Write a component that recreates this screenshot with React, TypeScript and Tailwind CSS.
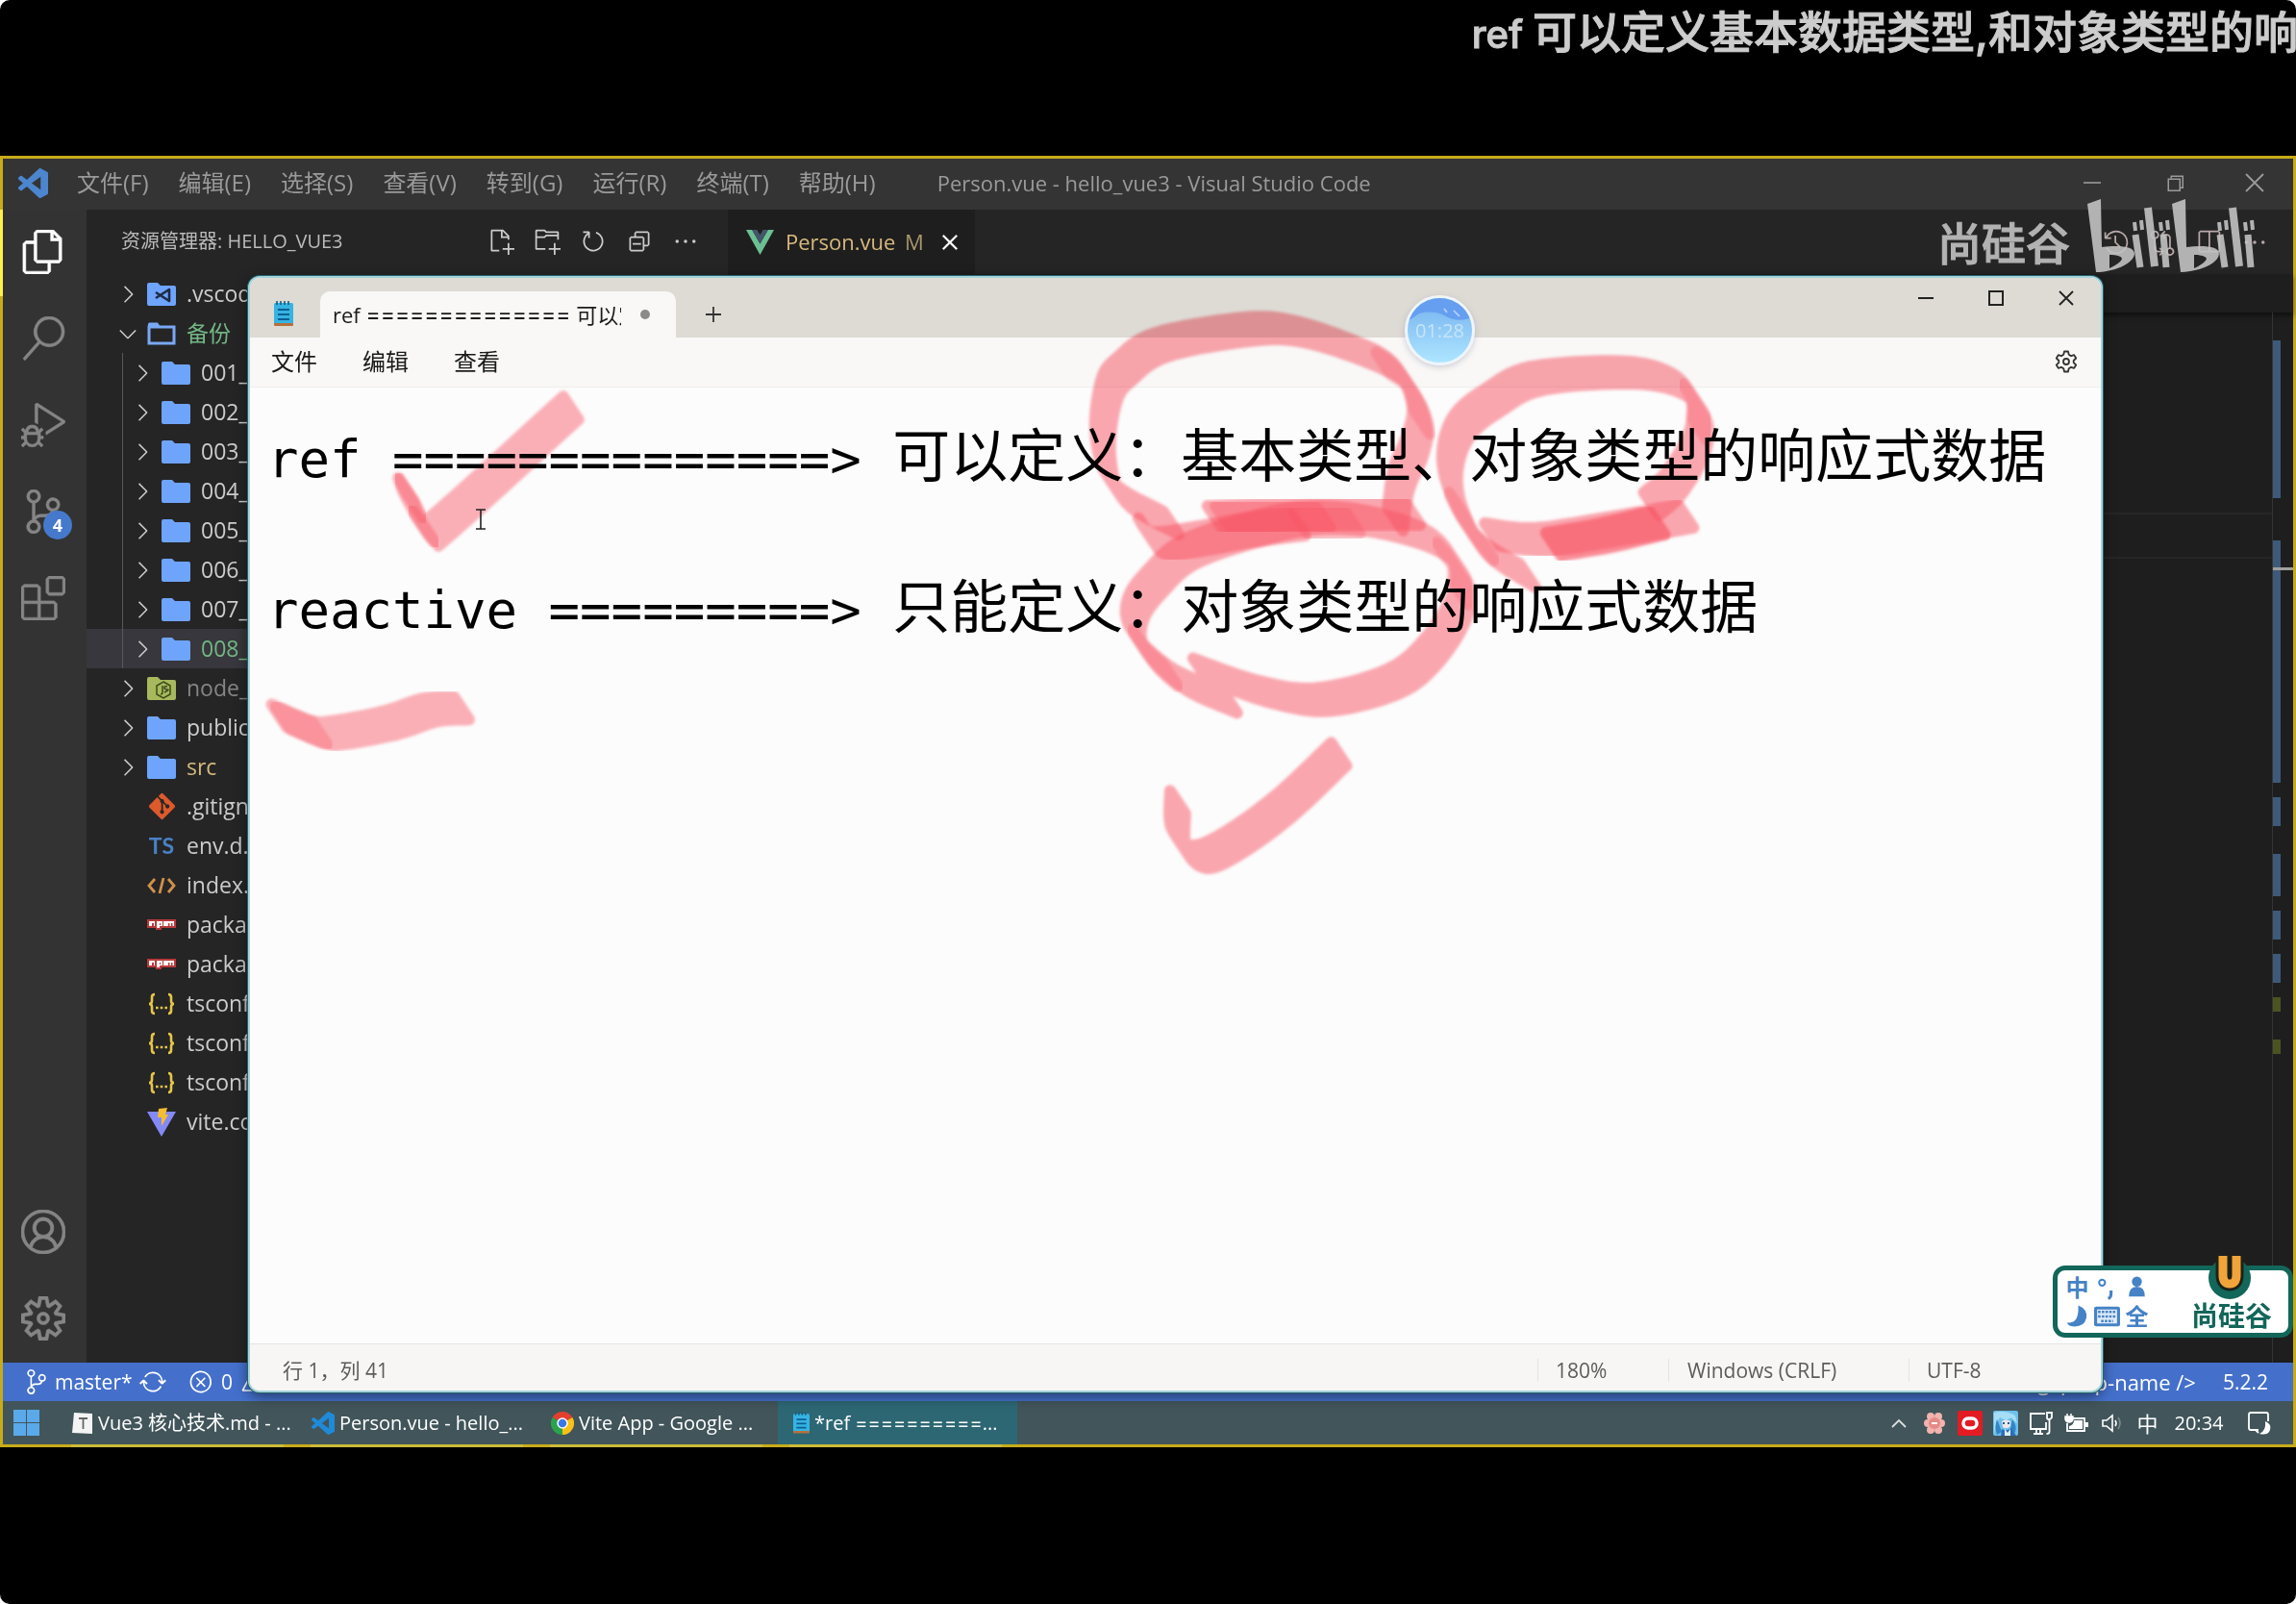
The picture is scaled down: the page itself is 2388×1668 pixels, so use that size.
import React from "react";
import {
  VscAccount,
  VscChevronDown,
  VscChevronRight,
  VscChromeRestore,
  VscClose,
  VscCollapseAll,
  VscDebugAlt,
  VscEllipsis,
  VscError,
  VscExtensions,
  VscFiles,
  VscGitCompare,
  VscHistory,
  VscNewFile,
  VscNewFolder,
  VscRefresh,
  VscSearch,
  VscSettingsGear,
  VscSourceControl,
  VscSplitHorizontal,
  VscSync,
  VscWarning,
} from "react-icons/vsc";
import { FaGitAlt } from "react-icons/fa";

/* ---------- logos and small drawings ---------- */

function CodeLogo({ className, color }: { className: string; color: string }) {
  return (
    <svg viewBox="0 0 100 100" className={className} aria-hidden="true">
      <path
        d="M96 11 76 1c-2-1-5-1-7 1L29 39 12 26c-2-1-4-1-5 0l-6 5c-2 2-2 4 0 6l15 13L1 63c-2 2-2 4 0 6l6 5c1 1 3 1 5 0l17-13 40 37c2 2 5 2 7 1l20-10c2-1 4-3 4-5V16c0-2-2-4-4-5ZM75 72 45 50l30-22v44Z"
        fill={color}
        fillRule="evenodd"
      />
    </svg>
  );
}

function VueLogo() {
  return (
    <svg viewBox="0 0 28 25" className="h-[26px] w-[29px]" aria-hidden="true">
      <path d="M0 0h6l8 14L22 0h6L14 25Z" fill="#6cc092" />
      <path d="M6 0h5l3 5 3-5h5l-8 14Z" fill="#43566b" />
    </svg>
  );
}

function NotepadIcon({ className }: { className: string }) {
  return (
    <svg viewBox="0 0 20 26" className={className} aria-hidden="true">
      <rect x="0" y="2" width="20" height="23" rx="1.5" fill="#35b4e3" />
      <rect x="0" y="23" width="20" height="3" rx="1" fill="#b5713c" />
      <path d="M3 0v4M7 0v4M11 0v4M15 0v4" stroke="#17597d" strokeWidth="1.6" />
      <path d="M4 9h12M4 14h12M4 19h12" stroke="#0d5f92" strokeWidth="2" />
    </svg>
  );
}

function ChromeIcon() {
  return (
    <svg viewBox="0 0 48 48" className="size-6 shrink-0" aria-hidden="true">
      <path d="M24 24 3.200 12A24 24 0 0 1 44.800 12Z" fill="#e2402f" />
      <path d="M24 24V48A24 24 0 0 1 3.200 12Z" fill="#2ba24c" />
      <path d="M24 24 44.800 12A24 24 0 0 1 24 48Z" fill="#fbc116" />
      <circle cx="24" cy="24" r="11.500" fill="#fff" />
      <circle cx="24" cy="24" r="8.500" fill="#3b78e7" />
    </svg>
  );
}

function FolderIcon({ kind }: { kind: string }) {
  const fill = kind === "node" ? "#a7b95c" : "#6ea4fb";
  if (kind === "open") {
    return (
      <svg viewBox="0 0 30 24" className="h-6 w-[30px]" aria-hidden="true">
        <path d="M2 5h26v17H2Z" fill="none" stroke="#79a9f5" strokeWidth="3" />
        <path d="M1 2q0-1.500 1.500-1.500H11l3 4.500H1Z" fill="#79a9f5" />
      </svg>
    );
  }
  return (
    <svg viewBox="0 0 30 24" className="h-6 w-[30px]" aria-hidden="true">
      <path d="M0 2Q0 0 2 0h9l3 3h14q2 0 2 2v17q0 2-2 2H2q-2 0-2-2Z" fill={fill} />
      {kind === "vscode" && (
        <path d="M9 10l14 9V7L9 16" fill="none" stroke="#1e2b45" strokeWidth="2.600" strokeLinejoin="round" />
      )}
      {kind === "node" && (
        <g fill="none" stroke="#3c4a1c" strokeWidth="1.500">
          <path d="m17 5 7 4v9l-7 4-7-4V9Z" />
          <path d="M16 9v7q0 2-2 2M21 10q-3-1-3 1t3 2-3 3" />
        </g>
      )}
    </svg>
  );
}

function FileGlyph({ kind }: { kind: string }) {
  switch (kind) {
    case "git":
      return <FaGitAlt className="size-[31px] text-[#dd5a2b]" />;
    case "ts":
      return <span className="font-['Lato'] text-[23px] font-bold leading-none text-[#4a80c4]">TS</span>;
    case "html":
      return (
        <svg viewBox="0 0 30 18" className="h-[18px] w-[30px]" fill="none" stroke="#d0924a" strokeWidth="2.800" aria-hidden="true">
          <path d="M8 2 2 9l6 7M22 2l6 7-6 7M17 1l-4 16" />
        </svg>
      );
    case "npm":
      return (
        <svg viewBox="0 0 30 11" className="h-[11px] w-[30px]" aria-hidden="true">
          <path d="M0 0h30v9H15v2H9V9H0Z" fill="#b9393b" />
          <path d="M2 2h6v5H7V4H5v3H2ZM10 2h6v5h-3v2h-3ZM13 4v2h1V4ZM17 2h11v5h-1.500V4H25v3h-1.500V4H22v3h-5Z" fill="#fff" fillRule="evenodd" />
        </svg>
      );
    case "json":
      return (
        <svg viewBox="0 0 30 24" className="h-6 w-[30px]" fill="none" stroke="#e6c54a" strokeWidth="2.600" aria-hidden="true">
          <path d="M8 2Q5 2 5 5v4q0 3-3 3 3 0 3 3v4q0 3 3 3M22 2q3 0 3 3v4q0 3 3 3-3 0-3 3v4q0 3-3 3" />
          <path d="M9 16h2.600M13.700 16h2.600M18.400 16H21" />
        </svg>
      );
    default:
      return (
        <svg viewBox="0 0 30 30" className="size-[30px]" aria-hidden="true">
          <path d="M0 4h30L15 30Z" fill="#8489f5" />
          <path d="M12 1 21 0l-2 7h3l-7 12v-9h-4Z" fill="#f5be2f" />
        </svg>
      );
  }
}

function BilibiliLogo() {
  const half = (
    <g>
      <path
        d="M0 5 14 0l1 50c18-2 34-1 34 7C48 68 26 76 9 76ZM23 58v14c7-3 12-7 13-10-1-3-6-4-13-4Z"
        fill="currentColor"
        fillRule="evenodd"
      />
      <g stroke="currentColor" fill="none">
        <path d="m50 37 5 34M79 37l3 34" strokeWidth="7" />
        <path d="m63 9 7 61" strokeWidth="8" />
        <path d="m49 24 1 9M56 22l1 10M76 24l1 9M83 22l1 10" strokeWidth="4" />
      </g>
    </g>
  );
  return (
    <svg viewBox="0 0 176 77" className="h-[77px] w-44" role="img" aria-label="bilibili">
      {half}
      <g transform="translate(88 0)">{half}</g>
    </svg>
  );
}

/* ---------- marker strokes ---------- */

type Pt = [number, number];

const NIB: Pt = [8, 12];

function smooth(points: Pt[]): Pt[] {
  const out: Pt[] = [];
  for (let i = 0; i < points.length - 1; i++) {
    const p0 = points[Math.max(0, i - 1)];
    const p1 = points[i];
    const p2 = points[i + 1];
    const p3 = points[Math.min(points.length - 1, i + 2)];
    for (let s = 0; s < 8; s++) {
      const t = s / 8;
      const f = (k: 0 | 1) =>
        0.5 *
        (2 * p1[k] +
          (p2[k] - p0[k]) * t +
          (2 * p0[k] - 5 * p1[k] + 4 * p2[k] - p3[k]) * t * t +
          (3 * p1[k] - p0[k] - 3 * p2[k] + p3[k]) * t * t * t);
      out.push([f(0), f(1)]);
    }
  }
  out.push(points[points.length - 1]);
  return out;
}

/** Area swept by a slanted chisel nib moved along the points. */
function sweep(points: Pt[]): string {
  const line = smooth(points);
  const [nx, ny] = NIB;
  let d = "";
  for (let i = 0; i < line.length - 1; i++) {
    const [ax, ay] = line[i];
    const [bx, by] = line[i + 1];
    const quad: Pt[] = [
      [ax - nx, ay - ny],
      [ax + nx, ay + ny],
      [bx + nx, by + ny],
      [bx - nx, by - ny],
    ];
    if (nx * (by - ay) - ny * (bx - ax) < 0) quad.reverse();
    d += "M" + quad.map((p) => p.map((v) => v.toFixed(1)).join(" ")).join("L") + "Z";
  }
  return d;
}

const STROKES: { o: number; pts: Pt[] }[] = [
  { o: 0.5, pts: [[1218, 545], [1163, 512], [1147, 463], [1153, 408], [1170, 384], [1208, 359], [1296, 343], [1350, 345], [1418, 367], [1458, 390], [1477, 431], [1473, 463], [1458, 500], [1452, 541]] },
  { o: 0.3, pts: [[1440, 379], [1458, 392], [1474, 416], [1480, 440]] },
  { o: 0.5, pts: [[1590, 600], [1541, 567], [1515, 520], [1509, 480], [1522, 443], [1555, 416], [1600, 394], [1695, 388], [1747, 400], [1769, 427], [1766, 463], [1742, 504], [1719, 525]] },
  { o: 0.3, pts: [[1760, 412], [1769, 429], [1769, 447]] },
  { o: 0.3, pts: [[1547, 572], [1530, 551], [1516, 525]] },
  { o: 0.5, pts: [[1279, 731], [1224, 706], [1184, 667], [1181, 635], [1203, 604], [1237, 575], [1303, 552], [1360, 540], [1424, 543], [1490, 563], [1519, 594], [1519, 631], [1490, 678], [1450, 710], [1377, 729], [1316, 721], [1249, 698]] },
  { o: 0.3, pts: [[1503, 577], [1518, 596], [1520, 618]] },
  { o: 0.3, pts: [[1217, 703], [1198, 686], [1186, 668]] },
  { o: 0.5, pts: [[1192, 552], [1206, 566], [1250, 561], [1300, 552], [1350, 546]] },
  { o: 0.5, pts: [[1264, 539], [1350, 536], [1470, 535]] },
  { o: 0.4, pts: [[1272, 539], [1376, 538]] },
  { o: 0.35, pts: [[1354, 546], [1407, 544]] },
  { o: 0.5, pts: [[1553, 557], [1605, 562], [1680, 551], [1755, 538]] },
  { o: 0.65, pts: [[1617, 567], [1670, 558], [1725, 545]] },
  { o: 0.5, pts: [[1225, 836], [1226, 874], [1247, 893], [1282, 879], [1337, 839], [1393, 786]] },
  { o: 0.45, pts: [[420, 510], [428, 530], [444, 553], [462, 543], [592, 425]] },
  { o: 0.4, pts: [[420, 510], [430, 528]] },
  { o: 0.4, pts: [[434, 543], [443, 554]] },
  { o: 0.45, pts: [[288, 746], [328, 763], [353, 763], [405, 753], [445, 740], [478, 738]] },
  { o: 0.3, pts: [[292, 748], [330, 764]] },
];

function MarkerLayer() {
  return (
    <svg
      viewBox="3 165 2382 1341"
      className="pointer-events-none absolute inset-0 size-full mix-blend-multiply"
      aria-hidden="true"
    >
      <filter id="marker-edge">
        <feGaussianBlur stdDeviation="1.5" />
      </filter>
      {STROKES.map((s, i) => (
        <g key={i} opacity={s.o} filter="url(#marker-edge)">
          <path d={sweep(s.pts)} fill="#fb5364" stroke="#fb5364" strokeWidth="12" strokeLinejoin="round" />
        </g>
      ))}
    </svg>
  );
}

/* ---------- editor ---------- */

const MENUS = ["文件(F)", "编辑(E)", "选择(S)", "查看(V)", "转到(G)", "运行(R)", "终端(T)", "帮助(H)"];

type Row = { name: string; icon: string; level?: number; fold?: "open" | "closed"; tone?: string; selected?: boolean };

const ROWS: Row[] = [
  { name: ".vscode", icon: "vscode", fold: "closed" },
  { name: "备份", icon: "open", fold: "open", tone: "text-[#73b683]" },
  { name: "001_Vue3", icon: "folder", fold: "closed", level: 1 },
  { name: "002_Vue3", icon: "folder", fold: "closed", level: 1 },
  { name: "003_Vue3", icon: "folder", fold: "closed", level: 1 },
  { name: "004_Vue3", icon: "folder", fold: "closed", level: 1 },
  { name: "005_Vue3", icon: "folder", fold: "closed", level: 1 },
  { name: "006_Vue3", icon: "folder", fold: "closed", level: 1 },
  { name: "007_Vue3", icon: "folder", fold: "closed", level: 1 },
  { name: "008_Vue3", icon: "folder", fold: "closed", level: 1, tone: "text-[#73b683]", selected: true },
  { name: "node_modules", icon: "node", fold: "closed", tone: "text-[#858585]" },
  { name: "public", icon: "folder", fold: "closed" },
  { name: "src", icon: "folder", fold: "closed", tone: "text-[#d6b97d]" },
  { name: ".gitignore", icon: "git" },
  { name: "env.d.ts", icon: "ts" },
  { name: "index.html", icon: "html" },
  { name: "package-lock.json", icon: "npm" },
  { name: "package.json", icon: "npm" },
  { name: "tsconfig.app.json", icon: "json" },
  { name: "tsconfig.json", icon: "json" },
  { name: "tsconfig.node.json", icon: "json" },
  { name: "vite.config.ts", icon: "vite" },
];

function TitleBar() {
  return (
    <header className="flex h-[53px] shrink-0 items-center bg-[#343435] pb-[3px] pl-4 text-[#9a9a9a]">
      <CodeLogo className="size-[31px]" color="#4b86cf" />
      <nav className="ml-[30px] flex gap-[31px] text-[24px]">
        {MENUS.map((m) => (
          <button key={m} type="button" className="whitespace-nowrap">
            {m}
          </button>
        ))}
      </nav>
      <p className="ml-16 flex-1 whitespace-nowrap text-[22px]">Person.vue - hello_vue3 - Visual Studio Code</p>
      <div className="flex items-center">
        <button type="button" aria-label="最小化" className="grid w-[86px] place-items-center">
          <span className="h-[2px] w-[18px] bg-[#858585]" />
        </button>
        <button type="button" aria-label="还原" className="grid w-[86px] place-items-center">
          <VscChromeRestore className="size-6" />
        </button>
        <button type="button" aria-label="关闭" className="grid w-20 place-items-center">
          <svg viewBox="0 0 20 20" className="size-5" stroke="#9a9a9a" strokeWidth="1.800" aria-hidden="true">
            <path d="m1 1 18 18M19 1 1 19" />
          </svg>
        </button>
      </div>
    </header>
  );
}

function ActivityBar() {
  const item = "relative grid h-[90px] w-full place-items-center pr-[4px] pb-[2px] [&_svg]:stroke-[0.3px]";
  return (
    <nav aria-label="活动栏" className="flex w-[87px] shrink-0 flex-col bg-[#333333] text-[#858585]">
      <button type="button" aria-label="资源管理器" className={item + " text-white"}>
        <VscFiles className="size-[46px]" />
        <span className="absolute -left-[3px] top-0 h-full w-[3px] bg-[#fff04a]" />
      </button>
      <button type="button" aria-label="搜索" className={item}>
        <VscSearch className="size-[46px]" />
      </button>
      <button type="button" aria-label="运行和调试" className={item}>
        <VscDebugAlt className="size-[46px]" />
      </button>
      <button type="button" aria-label="源代码管理" className={item}>
        <VscSourceControl className="size-[46px]" />
        <span className="absolute bottom-[17px] right-[15px] grid size-[30px] place-items-center rounded-full bg-[#4579cc] text-[18px] font-bold leading-none text-white">
          4
        </span>
      </button>
      <button type="button" aria-label="扩展" className={item}>
        <VscExtensions className="size-[46px]" />
      </button>
      <button type="button" aria-label="账户" className={item + " mt-auto"}>
        <VscAccount className="size-[46px]" />
      </button>
      <button type="button" aria-label="管理" className={item}>
        <VscSettingsGear className="size-[46px]" />
      </button>
    </nav>
  );
}

function Explorer() {
  return (
    <aside className="flex w-[667px] shrink-0 flex-col bg-[#252526] text-[#cccccc]">
      <div className="flex h-[67px] items-center pb-px pl-9 pr-[30px]">
        <h2 className="flex-1 whitespace-nowrap text-[20px] text-[#bbbbbb]">资源管理器: HELLO_VUE3</h2>
        <div className="flex gap-5">
          <button type="button" aria-label="新建文件"><VscNewFile className="size-7" /></button>
          <button type="button" aria-label="新建文件夹"><VscNewFolder className="size-7" /></button>
          <button type="button" aria-label="刷新"><VscRefresh className="size-7" /></button>
          <button type="button" aria-label="全部折叠"><VscCollapseAll className="size-7" /></button>
          <button type="button" aria-label="更多"><VscEllipsis className="size-7" /></button>
        </div>
      </div>
      <ul className="text-[23px]">
        {ROWS.map((r, i) => (
          <li key={i} className={r.selected ? "flex h-[41px] bg-[#37373d]" : "flex h-[41px]"}>
            {r.level ? <span className="ml-[37px] w-[7px] border-l border-[#585858]" /> : <span className="w-[29px]" />}
            <button type="button" className="flex items-center whitespace-nowrap">
              <span className="grid w-[24px] place-items-center">
                {r.fold === "closed" && <VscChevronRight className="size-7 shrink-0" />}
                {r.fold === "open" && <VscChevronDown className="size-7 shrink-0" />}
              </span>
              <span className="ml-[10px] grid w-[30px] place-items-center">
                {r.fold ? <FolderIcon kind={r.icon} /> : <FileGlyph kind={r.icon} />}
              </span>
              <span className={"ml-[11px] " + (r.tone ?? "")}>{r.name}</span>
            </button>
          </li>
        ))}
      </ul>
    </aside>
  );
}

const RULER = [
  { gap: 29, size: 164, tone: "bg-[#3d5a7a]" },
  { gap: 44, size: 252, tone: "bg-[#3d5a7a]" },
  { gap: 15, size: 30, tone: "bg-[#3d5a7a]" },
  { gap: 29, size: 44, tone: "bg-[#3d5a7a]" },
  { gap: 15, size: 30, tone: "bg-[#3d5a7a]" },
  { gap: 15, size: 30, tone: "bg-[#3d5a7a]" },
  { gap: 15, size: 15, tone: "bg-[#4b5320]" },
  { gap: 29, size: 15, tone: "bg-[#4b5320]" },
];

function Editor() {
  return (
    <main className="flex min-w-0 flex-1 flex-col bg-[#1e1e1e]">
      <div className="flex h-[67px] bg-[#252526]">
        <div className="flex w-[257px] items-center bg-[#1e1e1e] pl-[19px] text-[22px] text-[#d6b97d]">
          <VueLogo />
          <span className="ml-3 w-[124px]">Person.vue</span>
          <span className="text-[#a8956c]">M</span>
          <button type="button" aria-label="关闭标签页" className="ml-[13px] text-white [&_svg]:stroke-[0.4px]">
            <VscClose className="size-7" />
          </button>
        </div>
        <div className="ml-auto flex items-center pr-4 text-[#b9a9a9]">
          <button type="button" aria-label="时间线" className="grid w-12 place-items-center"><VscHistory className="size-7" /></button>
          <button type="button" aria-label="比较更改" className="grid w-12 place-items-center"><VscGitCompare className="size-7" /></button>
          <button type="button" aria-label="拆分编辑器" className="grid w-12 place-items-center"><VscSplitHorizontal className="size-7" /></button>
          <button type="button" aria-label="更多操作" className="grid w-12 place-items-center"><VscEllipsis className="size-7" /></button>
        </div>
      </div>
      <div className="h-10 shadow-[0_3px_5px_rgba(0,0,0,0.5)]" />
      <div className="flex flex-1">
        <div className="flex-1 pt-[208px]">
          <div className="h-12 border-y-2 border-[#262626]" />
        </div>
        <div className="relative w-[22px] border-l border-[#353535]">
          {RULER.map((m, i) => (
            <div key={i} style={{ marginTop: m.gap, height: m.size }} className={"w-2 " + m.tone} />
          ))}
          <span className="absolute left-0 top-[265px] h-[3px] w-full bg-[#a0a0a0]" />
        </div>
      </div>
    </main>
  );
}

function StatusBar() {
  return (
    <footer className="flex h-10 shrink-0 items-center bg-[#4470cb] pl-[22px] pr-[26px] text-[21px] text-white">
      <VscSourceControl className="size-[26px]" />
      <span className="ml-[6px] w-[84px]">master*</span>
      <VscSync className="ml-1 size-7" />
      <VscError className="ml-[23px] size-[26px]" />
      <span className="ml-2">0</span>
      <VscWarning className="ml-2 size-[26px]" />
      <span className="ml-2">0</span>
      <span className="ml-auto whitespace-nowrap text-[22px]">&lt;tag :prop-name /&gt;</span>
      <span className="ml-[28px]">5.2.2</span>
    </footer>
  );
}

/* ---------- notepad window ---------- */

function Notepad() {
  return (
    <section
      aria-label="记事本"
      className="absolute bottom-[54px] left-[255px] right-[198px] top-[122px] flex flex-col overflow-hidden rounded-[12px] border-2 border-[#a5d3da] bg-[#fcfcfc] text-[#1a1a1a] shadow-[0_0_0_1px_#25616b,0_4px_14px_rgba(0,0,0,0.5)]"
    >
      <div className="flex h-[62px] shrink-0 items-end bg-[#dedbd5]">
        <NotepadIcon className="mb-3 ml-[25px] h-[26px] w-5" />
        <div className="ml-7 flex h-12 w-[370px] items-center rounded-t-[10px] bg-[#f9f8f7] pl-[13px] text-[22px]">
          <span className="flex w-[300px] items-center overflow-hidden whitespace-nowrap">
            ref&nbsp;<span className="font-['Inter'] text-[23px]">==============</span>&nbsp;可以定义
          </span>
          <span className="ml-5 size-[10px] rounded-full bg-[#8b8b8b]" />
        </div>
        <button type="button" aria-label="新建标签页" className="mb-4 ml-[31px]">
          <svg viewBox="0 0 16 16" className="size-4" stroke="#333" strokeWidth="1.800" aria-hidden="true">
            <path d="M8 0v16M0 8h16" />
          </svg>
        </button>
        <div className="ml-auto flex self-start pt-[5px]">
          <button type="button" aria-label="最小化" className="grid h-8 w-[73px] place-items-center">
            <span className="h-[2px] w-4 bg-[#222]" />
          </button>
          <button type="button" aria-label="最大化" className="grid h-8 w-[73px] place-items-center">
            <span className="size-4 border-2 border-[#222]" />
          </button>
          <button type="button" aria-label="关闭" className="grid h-8 w-[73px] place-items-center">
            <svg viewBox="0 0 16 16" className="size-4" stroke="#222" strokeWidth="1.800" aria-hidden="true">
              <path d="m1 1 14 14M15 1 1 15" />
            </svg>
          </button>
        </div>
      </div>
      <div className="flex h-[52px] shrink-0 items-center border-b border-[#efeeec] bg-[#f9f8f7] pb-px pl-[22px] pr-6 text-[24px]">
        <div className="flex flex-1 gap-[47px]">
          <button type="button">文件</button>
          <button type="button">编辑</button>
          <button type="button">查看</button>
        </div>
        <button type="button" aria-label="设置">
          <svg viewBox="0 0 24 24" className="size-6" fill="none" stroke="#333" strokeWidth="1.800" strokeLinejoin="round" aria-hidden="true">
            <path d="M10 1.500h4l.7 3.300 2.300 1.300 3.200-1 2 3.400L19.700 11v2.200l2.500 2.300-2 3.400-3.200-1-2.300 1.300-.7 3.300h-4l-.7-3.300L7 17.900l-3.200 1-2-3.400L4.300 13.200V11L1.800 8.500l2-3.400 3.200 1 2.300-1.300Z" />
            <circle cx="12" cy="12" r="3" />
          </svg>
        </button>
      </div>
      <div
        role="textbox"
        aria-multiline="true"
        aria-label="文本编辑器"
        contentEditable
        suppressContentEditableWarning
        spellCheck={false}
        className="flex-1 whitespace-pre pl-[18px] font-['DejaVu_Sans_Mono','Noto_Sans_CJK_SC',monospace] text-[54px] text-black outline-none"
      >
        <p className="h-[157px] leading-[150px]">
          {"ref ==============> "}
          <span className="font-['Noto_Sans_CJK_SC'] text-[60px] leading-none">可以定义：基本类型、对象类型的响应式数据</span>
        </p>
        <p className="h-[157px] leading-[150px]">
          {"reactive =========> "}
          <span className="font-['Noto_Sans_CJK_SC'] text-[60px] leading-none">只能定义：对象类型的响应式数据</span>
        </p>
      </div>
      <div className="flex h-[49px] shrink-0 items-center border-t border-[#e6e5e4] bg-[#f7f6f5] pl-[34px] pt-[6px] text-[21px] text-[#5c5c5c]">
        <span className="flex-1">行 1，列 41</span>
        <span className="w-[136px] border-l border-[#e4e3e2] pl-[18px] leading-6">180%</span>
        <span className="w-[250px] border-l border-[#e4e3e2] pl-[19px] leading-6">Windows (CRLF)</span>
        <span className="w-[200px] border-l border-[#e4e3e2] pl-[18px] leading-6">UTF-8</span>
      </div>
    </section>
  );
}

/* ---------- desktop overlays ---------- */

function TimerBubble() {
  return (
    <div className="absolute left-[1458px] top-[142px] grid size-[73px] place-items-center overflow-hidden rounded-full border-[3px] border-[#eef5fc] bg-gradient-to-b from-[#74b0ee] to-[#aee6ff] shadow-[0_2px_6px_rgba(120,120,140,0.35)]">
      <svg viewBox="0 0 67 67" className="absolute inset-0 size-full" aria-hidden="true">
        <path d="M0 0h67v20Q52 26 40 19T12 16L0 24Z" fill="#669ff0" />
        <path d="m38 11 3 4M48 13l6 6" stroke="#b9d6fb" strokeWidth="1.500" />
      </svg>
      <span className="relative text-[20px] leading-none text-[#c6e3f8]">01:28</span>
    </div>
  );
}

function InputMethodBar() {
  return (
    <div className="absolute bottom-[111px] right-0 flex h-[75px] w-[250px] items-center rounded-[13px] border-[5px] border-[#12665a] bg-white">
      <div className="ml-[6px] grid grid-cols-3 gap-x-[2px] text-[#4583c6]">
        <span className="grid h-[30px] w-[29px] place-items-center text-[24px] font-bold leading-none">中</span>
        <svg viewBox="0 0 28 28" className="h-[30px] w-[29px]" fill="none" stroke="currentColor" strokeWidth="2" aria-hidden="true">
          <circle cx="9" cy="9" r="3" />
          <path d="M18 17v3q0 4-3 5" strokeWidth="3" />
        </svg>
        <svg viewBox="0 0 28 28" className="h-[30px] w-[29px]" fill="currentColor" aria-hidden="true">
          <circle cx="14" cy="8" r="5" />
          <path d="M6 23q0-10 8-10t8 10Z" />
        </svg>
        <svg viewBox="0 0 28 28" className="h-[30px] w-[29px]" fill="currentColor" aria-hidden="true">
          <path d="M15 3q10 4 8 13T9 24Q4 23 4 20q12 2 11-17Z" />
        </svg>
        <svg viewBox="0 0 28 28" className="h-[30px] w-[29px]" aria-hidden="true">
          <rect x="1" y="4" width="26" height="20" rx="2" fill="currentColor" />
          <path d="M4 7h20v14H4Z" fill="#fff" opacity="0.85" />
          <path d="M5 9.500h18M5 14h18M8 18.500h12" stroke="currentColor" strokeWidth="2.400" strokeDasharray="2.500 1.200" />
        </svg>
        <span className="grid h-[30px] w-[29px] place-items-center text-[24px] font-bold leading-none">全</span>
      </div>
      <span className="ml-auto mr-[17px] self-end font-['Noto_Sans_CJK_SC'] text-[28px] font-bold leading-[38px] text-[#12665a]">
        尚硅谷
      </span>
      <svg viewBox="0 0 46 54" className="absolute -top-[23px] right-[38px] h-[54px] w-[46px]" aria-hidden="true">
        <circle cx="23" cy="31" r="22" fill="#12665a" />
        <path d="M16 8v20q0 9 7 9t7-9V8" fill="none" stroke="#1c2218" strokeWidth="15" />
        <path d="M16 8v20q0 9 7 9t7-9V8" fill="none" stroke="#f2a43a" strokeWidth="9" />
      </svg>
    </div>
  );
}

/* ---------- taskbar ---------- */

const TASKS: { icon: React.ReactNode; label: React.ReactNode; active?: boolean }[] = [
  {
    icon: (
      <svg viewBox="0 0 22 24" className="h-6 w-[22px] shrink-0" aria-hidden="true">
        <path d="M2 1 21 2v21L0 22Z" fill="#f4f4f4" />
        <path d="M7 7h9M11.500 7v11" stroke="#666" strokeWidth="1.800" />
      </svg>
    ),
    label: "Vue3 核心技术.md - ...",
  },
  { icon: <CodeLogo className="size-6 shrink-0" color="#1f8ad8" />, label: "Person.vue - hello_..." },
  { icon: <ChromeIcon />, label: "Vite App - Google ..." },
  {
    icon: <NotepadIcon className="ml-[3px] h-[23px] w-[17px] shrink-0" />,
    label: (
      <>
        *ref <span className="font-['Inter']">==========</span>...
      </>
    ),
    active: true,
  },
];

function Tray({ children }: { children: React.ReactNode }) {
  return <span className="grid w-[37px] place-items-center">{children}</span>;
}

function Taskbar() {
  return (
    <footer className="flex h-[45px] shrink-0 items-stretch bg-[#41555a] pr-[7px] text-white">
      <button type="button" aria-label="开始" className="flex w-[59px] items-center pl-[11px]">
        <svg viewBox="0 0 27 27" className="size-[27px]" aria-hidden="true">
          <path d="M0 0h13v13H0ZM14 0h13v13H14ZM0 14h13v13H0ZM14 14h13v13H14Z" fill="#5aa9ea" />
        </svg>
      </button>
      {TASKS.map((t, i) => (
        <button
          key={i}
          type="button"
          className={
            "relative flex w-[249px] items-center gap-[5px] whitespace-nowrap pl-[13px] text-[20px] after:absolute after:-bottom-[3px] after:left-3 after:right-4 after:h-[3px] after:bg-[#cdbb3a] " +
            (t.active ? "bg-[#2d6774]" : "")
          }
        >
          {t.icon}
          <span>{t.label}</span>
        </button>
      ))}
      <div className="ml-auto flex items-center">
        <Tray>
          <svg viewBox="0 0 16 10" className="h-[10px] w-4" fill="none" stroke="#ddd" strokeWidth="1.800" aria-hidden="true">
            <path d="m1 9 7-7 7 7" />
          </svg>
        </Tray>
        <Tray>
          <svg viewBox="0 0 24 24" className="size-6" aria-hidden="true">
            <g fill="#f3b3ae">
              <circle cx="8" cy="5" r="4" />
              <circle cx="16" cy="5" r="4" />
              <circle cx="5" cy="12" r="4" />
              <circle cx="19" cy="12" r="4" />
              <circle cx="8" cy="19" r="4" />
              <circle cx="16" cy="19" r="4" />
            </g>
            <circle cx="12" cy="12" r="6" fill="#e58a88" />
            <path d="M9 12h6" stroke="#fff" strokeWidth="2" />
          </svg>
        </Tray>
        <Tray>
          <svg viewBox="0 0 26 26" className="size-[26px]" aria-hidden="true">
            <rect width="26" height="26" rx="2" fill="#e31b23" />
            <rect x="6" y="8" width="14" height="10" rx="5" fill="none" stroke="#fff" strokeWidth="3.500" />
          </svg>
        </Tray>
        <Tray>
          <svg viewBox="0 0 26 26" className="size-[26px]" aria-hidden="true">
            <rect width="26" height="26" rx="2" fill="#6fc0ea" />
            <path d="M1 2q12-3 22 3l2 8-4-3-2-3-6 3-6-3-4 7-2 10Z" fill="#a5def6" />
            <path d="M4 9q-3 8 0 16l5-3-3-8ZM20 9q5 6 3 14l-5-4Z" fill="#3186c6" />
            <path d="M9 11q5-3 9 0v5q-4 4-8 1Z" fill="#efe6ea" />
            <path d="M10 13h2M15 13h2" stroke="#225c9c" strokeWidth="2" />
            <path d="M9 19q5 3 10-1l5 8H8Z" fill="#2c6fb8" />
            <path d="m12 19 3 4 3-4v7h-6Z" fill="#dff0fa" />
          </svg>
        </Tray>
        <Tray>
          <svg viewBox="0 0 26 26" className="size-[26px]" fill="none" stroke="#fff" strokeWidth="1.800" aria-hidden="true">
            <path d="M17 3H2v16h16v-7M5 24h10M8 19v5M12 19v5M19 2v5q0 2 2 2t3-2V2ZM21.500 9v13q0 2-3 2" />
          </svg>
        </Tray>
        <Tray>
          <svg viewBox="0 0 26 22" className="h-[22px] w-[26px]" aria-hidden="true">
            <path d="M5 6h16v13H3v-8" fill="none" stroke="#fff" strokeWidth="1.800" />
            <path d="M10 8h9v9H5v-3q5-1 5-6ZM22 10h3v5h-3Z" fill="#fff" />
            <path d="M3 1v3M7 1v3M1 4h8v3q-1 3-4 3T1 7Z" fill="#fff" stroke="#fff" strokeWidth="1.500" />
          </svg>
        </Tray>
        <Tray>
          <svg viewBox="0 0 24 20" className="h-5 w-6" fill="none" stroke="#fff" strokeWidth="1.600" aria-hidden="true">
            <path d="M2 7h4l6-5v16l-6-5H2ZM15 7q2 3 0 6" />
            <path d="M18 4q4 6 0 12" stroke="#7d8b8e" />
          </svg>
        </Tray>
        <Tray>
          <span className="text-[22px] leading-none">中</span>
        </Tray>
        <time className="w-[70px] text-center text-[20px]">20:34</time>
        <button type="button" aria-label="通知" className="grid w-14 place-items-center">
          <svg viewBox="0 0 26 26" className="size-[26px]" aria-hidden="true">
            <path d="M12 20H4q-2 0-2-2V4q0-2 2-2h16q2 0 2 2v7M9 20l3 3" fill="none" stroke="#fff" strokeWidth="1.800" />
            <path d="M19 11q7 3 5 9t-11 4q7-3 6-13Z" fill="#fff" />
          </svg>
        </button>
      </div>
    </footer>
  );
}

export default function App() {
  return (
    <div className="min-h-screen bg-white">
      <div className="flex min-h-screen flex-col overflow-hidden rounded-[10px] bg-black font-['Open_Sans','Noto_Sans_CJK_SC',sans-serif]">
        <p className="h-[162px] overflow-hidden whitespace-nowrap pl-[64.1%] font-['Inter','Noto_Sans_CJK_SC',sans-serif] text-[46px] font-medium leading-[66px] text-[#cccccc] [-webkit-text-stroke:1px_#cccccc]">
          <span className="mr-[10px] text-[40px]">ref</span>可以定义基本数据类型,和对象类型的响应式数据
        </p>
        <div className="relative flex aspect-video w-full flex-col border-[3px] border-[#c8ab18]">
          <TitleBar />
          <div className="flex min-h-0 flex-1">
            <ActivityBar />
            <Explorer />
            <Editor />
          </div>
          <StatusBar />
          <Taskbar />
          <Notepad />
          <TimerBubble />
          <MarkerLayer />
          <svg viewBox="0 0 12 22" className="absolute left-[491px] top-[364px] h-[22px] w-3" stroke="#222" strokeWidth="1.600" fill="none" aria-hidden="true">
            <path d="M1 1h10M6 1v20M1 21h10" />
          </svg>
          <InputMethodBar />
          <div className="absolute right-[38px] top-[42px] flex items-center gap-[18px] text-[#c2c2c2] opacity-90">
            <span className="pt-3 text-[46px] font-medium leading-none [-webkit-text-stroke:1px_#c2c2c2]">尚硅谷</span>
            <BilibiliLogo />
          </div>
        </div>
      </div>
    </div>
  );
}
